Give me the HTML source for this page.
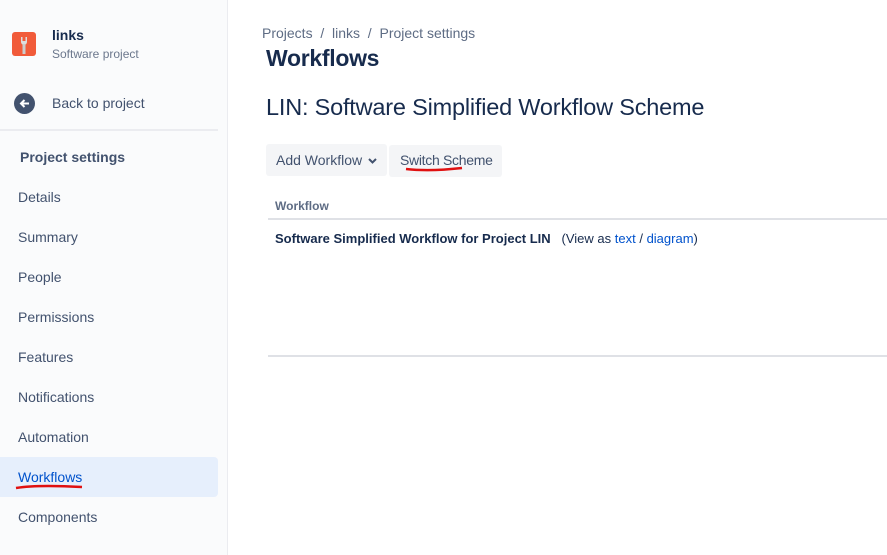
<!DOCTYPE html>
<html><head><style>
body{margin:0;width:887px;height:555px;overflow:hidden;background:#fff;font-family:"Liberation Sans",sans-serif;color:#172b4d;position:relative}
.side{position:absolute;left:0;top:0;width:227px;height:555px;background:#fafbfc;border-right:1px solid #ebecf0}
.a{position:absolute;white-space:nowrap}
.nav{position:absolute;left:18px;font-size:14px;color:#42526e}
</style></head><body>
<div class="side">
<div class="a" style="left:12px;top:32px;width:24px;height:24px;background:#f15b3a;border-radius:3px"><svg width="24" height="24"><path d="M9 5v5a3 3 0 0 0 6 0V5l-1.5 0v4h-3V5z" fill="#ddd"/><rect x="10.5" y="12" width="3" height="10" fill="#ccc"/></svg></div>
<div class="a" style="left:52px;top:27px;font-size:14px;font-weight:bold">links</div>
<div class="a" style="left:52px;top:47px;font-size:12px;color:#6b778c">Software project</div>
<div class="a" style="left:14px;top:93px;width:21px;height:21px;border-radius:50%;background:#42526e"><svg width="21" height="21"><path d="M15 10.5H7M10.5 7l-3.5 3.5 3.5 3.5" stroke="#fff" stroke-width="2" fill="none"/></svg></div>
<div class="a" style="left:52px;top:95px;font-size:14px;color:#42526e">Back to project</div>
<div class="a" style="left:0;top:129px;width:218px;height:2px;background:#ebecf0"></div>
<div class="a" style="left:20px;top:149px;font-size:14px;font-weight:bold;color:#42526e">Project settings</div>
<div class="nav" style="top:189px">Details</div>
<div class="nav" style="top:229px">Summary</div>
<div class="nav" style="top:269px">People</div>
<div class="nav" style="top:309px">Permissions</div>
<div class="nav" style="top:349px">Features</div>
<div class="nav" style="top:389px">Notifications</div>
<div class="nav" style="top:429px">Automation</div>
<div class="a" style="left:0;top:457px;width:218px;height:40px;background:#e6effc;border-radius:0 4px 4px 0"></div>
<div class="nav" style="top:469px;color:#0052cc">Workflows</div>
<svg class="a" style="left:14px;top:482px" width="70" height="10"><path d="M2 6C20 3 50 4 68 5" stroke="#e01010" stroke-width="2.5" fill="none"/></svg>
<div class="nav" style="top:509px">Components</div>
</div>
<div class="a" style="left:262px;top:25px;font-size:14px;color:#5e6c84">Projects &nbsp;/&nbsp; links &nbsp;/&nbsp; Project settings</div>
<div class="a" style="left:266px;top:45px;font-size:23px;font-weight:bold;letter-spacing:-0.3px">Workflows</div>
<div class="a" style="left:266px;top:94px;font-size:23.5px;letter-spacing:-0.2px">LIN: Software Simplified Workflow Scheme</div>
<div class="a" style="left:266px;top:144px;width:121px;height:32px;background:#f4f5f7;border-radius:3px;font-size:14px;color:#42526e;line-height:32px;padding-left:10px;box-sizing:border-box">Add Workflow <svg width="9" height="8" style="margin-left:2px"><path d="M1 2l3.5 3.5L8 2" stroke="#42526e" stroke-width="2" fill="none"/></svg></div>
<div class="a" style="left:389px;top:145px;width:113px;height:32px;background:#f4f5f7;border-radius:3px;font-size:14px;color:#42526e;line-height:30px;padding-left:11px;box-sizing:border-box;letter-spacing:-0.3px">Switch Scheme</div>
<svg class="a" style="left:404px;top:164px" width="62" height="10"><path d="M2 5C20 7 40 6 58 4" stroke="#e01010" stroke-width="2.5" fill="none"/></svg>
<div class="a" style="left:275px;top:199px;font-size:12px;font-weight:bold;color:#5e6c84">Workflow</div>
<div class="a" style="left:268px;top:218px;width:619px;height:2px;background:#dfe1e6"></div>
<div class="a" style="left:275px;top:231px;font-size:13px"><b>Software Simplified Workflow for Project LIN</b> &nbsp; (View as <span style="color:#0052cc">text</span> / <span style="color:#0052cc">diagram</span>)</div>
<div class="a" style="left:268px;top:355px;width:619px;height:2px;background:#dfe1e6"></div>
</body></html>
